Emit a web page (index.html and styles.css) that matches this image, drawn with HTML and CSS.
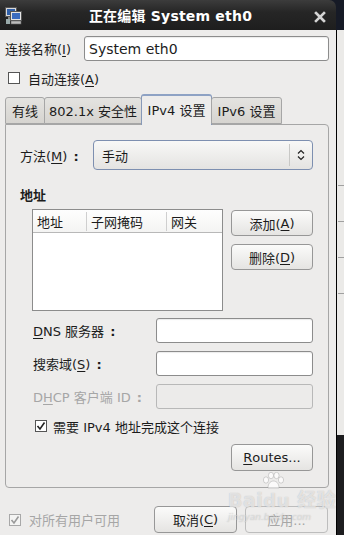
FILE: index.html
```html
<!DOCTYPE html>
<html>
<head>
<meta charset="utf-8">
<link rel="stylesheet" href="styles.css">
</head>
<body>
<div class="screen">
  <div class="window">
    <div class="titlebar">
      <svg class="app-icon" width="18" height="18" viewBox="0 0 18 18">
        <rect x="0.5" y="0.5" width="11" height="9" fill="#d8d8d8" stroke="#555"/>
        <rect x="2" y="2" width="8" height="6" fill="#2f5fa8"/>
        <rect x="3" y="10" width="6" height="2" fill="#888"/>
        <rect x="1" y="12" width="4" height="5" fill="#9aa"/>
        <rect x="5.5" y="4.5" width="11" height="9" fill="#e4e4e4" stroke="#555"/>
        <rect x="7" y="6" width="8" height="6" fill="#3a6cc0"/>
        <rect x="6" y="14" width="10" height="3" fill="#bbb" stroke="#666" stroke-width="0.6"/>
      </svg>
      <span class="title">正在编辑 System eth0</span>
      <svg class="close" width="12" height="12" viewBox="0 0 12 12">
        <path d="M2 2 L10 10 M10 2 L2 10" stroke="#d4d4d4" stroke-width="2.6" stroke-linecap="square"/>
      </svg>
    </div>
    <div class="content">
      <div class="name-row">
        <span class="name-label">连接名称(<u>I</u>)</span>
        <div class="entry name-entry">System eth0</div>
      </div>
      <div class="check-row">
        <span class="box"></span>
        <span>自动连接(<u>A</u>)</span>
      </div>
      <div class="tabs">
        <div class="tab tab-wired">有线</div>
        <div class="tab tab-sec">802.1x 安全性</div>
        <div class="tab tab-active">IPv4 设置</div>
        <div class="tab tab-v6">IPv6 设置</div>
      </div>
      <div class="panel">
        <div class="method-row">
          <span class="method-label">方法(<u>M</u>)<span class="colon">:</span></span>
          <div class="combo">
            <span class="combo-text">手动</span>
            <span class="combo-sep"></span>
            <svg class="combo-arrow" width="8" height="12" viewBox="0 0 8 12">
              <path d="M1 4.5 L4 1.5 L7 4.5 M1 7.5 L4 10.5 L7 7.5" fill="none" stroke="#222" stroke-width="1.2"/>
            </svg>
          </div>
        </div>
        <div class="section-title">地址</div>
        <div class="address">
          <div class="list">
            <div class="list-head">
              <span class="col col-addr">地址</span>
              <span class="col col-mask">子网掩码</span>
              <span class="col col-gw">网关</span>
            </div>
          </div>
          <div class="addr-buttons">
            <div class="button">添加(<u>A</u>)</div>
            <div class="button">删除(<u>D</u>)</div>
          </div>
        </div>
        <div class="form">
          <span class="form-label"><u>D</u>NS 服务器<span class="colon">:</span></span>
          <div class="entry"></div>
          <span class="form-label">搜索域(<u>S</u>)<span class="colon">:</span></span>
          <div class="entry"></div>
          <span class="form-label disabled">D<u>H</u>CP 客户端 ID<span class="colon">:</span></span>
          <div class="entry entry-disabled"></div>
        </div>
        <div class="check-row require-row">
          <span class="box">
            <svg width="10" height="10" viewBox="0 0 10 10"><path d="M1.5 5 L4 8 L8.5 1.5" fill="none" stroke="#222" stroke-width="1.6"/></svg>
          </span>
          <span>需要 IPv4 地址完成这个连接</span>
        </div>
        <div class="routes-row">
          <div class="button routes"><u>R</u>outes...</div>
        </div>
      </div>
      <div class="footer">
        <div class="check-row footer-check disabled">
          <span class="box box-disabled">
            <svg width="10" height="10" viewBox="0 0 10 10"><path d="M1.5 5 L4 8 L8.5 1.5" fill="none" stroke="#9a9a9a" stroke-width="1.6"/></svg>
          </span>
          <span>对所有用户可用</span>
        </div>
        <div class="footer-buttons">
          <div class="button">取消(<u>C</u>)</div>
          <div class="button button-disabled">应用...</div>
        </div>
      </div>
      <div class="watermark">
        <svg class="wm-paw" width="22" height="18" viewBox="0 0 22 18">
          <g fill="rgba(255,255,255,0.75)" stroke="rgba(150,150,150,0.5)" stroke-width="0.8">
            <ellipse cx="4" cy="8" rx="2.6" ry="3.2"/>
            <ellipse cx="9" cy="3.5" rx="2.6" ry="3.2"/>
            <ellipse cx="14.5" cy="3.5" rx="2.6" ry="3.2"/>
            <ellipse cx="19" cy="8" rx="2.6" ry="3.2"/>
            <path d="M6 16 C6 11 9 9 11.5 9 C14 9 17 11 17 16 Z"/>
          </g>
        </svg>
        <div class="wm-main">Bai<span class="wm-du">du</span> 经验</div>
        <div class="wm-sub">jingyan.baidu.com</div>
      </div>
    </div>
  </div>
  <div class="behind">
    <div class="behind-top"></div>
    <div class="behind-win">
      <div class="bline"></div>
      <div class="bline"></div>
      <div class="bline"></div>
      <div class="bline"></div>
    </div>
    <div class="behind-bottom"></div>
  </div>
</div>
</body>
</html>
```

FILE: styles.css
```css
* { box-sizing: border-box; }
html, body { margin: 0; padding: 0; }
body {
  width: 344px;
  height: 535px;
  overflow: hidden;
  background: #161a26;
  font-family: "DejaVu Sans", "Noto Sans CJK SC", sans-serif;
  font-size: 13px;
  color: #1c1c1c;
}
u { text-decoration: underline; text-underline-offset: 2px; }
.colon { font-weight: bold; margin-left: 6px; }

.screen { display: flex; width: 344px; height: 535px; }

.window {
  width: 336px;
  height: 535px;
  display: flex;
  flex-direction: column;
  flex: none;
}

.titlebar {
  height: 30px;
  flex: none;
  display: flex;
  align-items: center;
  background: linear-gradient(#3c3c3c, #262626 40%, #1e1e1e);
  border-top-right-radius: 7px;
  padding: 0 8px 0 5px;
  color: #fff;
}
.app-icon { flex: none; margin-top: 2px; }
.title {
  flex: 1;
  text-align: center;
  font-weight: bold;
  font-size: 14px;
  letter-spacing: 0.2px;
  padding-left: 4px;
}
.close { flex: none; margin-top: 4px; margin-right: 2px; }

.content {
  position: relative;
  flex: 1;
  background: #edeceb;
  padding: 6px 7px 0 5px;
  display: flex;
  flex-direction: column;
}

.name-row {
  display: flex;
  align-items: center;
  height: 25px;
}
.name-label { width: 79px; flex: none; }
.entry {
  height: 25px;
  background: #fff;
  border: 1px solid #8c8c8c;
  border-radius: 3px;
  box-shadow: inset 0 1px 1px rgba(0,0,0,0.08);
  padding: 0 5px;
  display: flex;
  align-items: center;
}
.name-entry { flex: 1; font-size: 14px; padding-left: 4px; }

.check-row {
  display: flex;
  align-items: center;
  height: 24px;
  margin-top: 5px;
  padding-left: 3px;
}
.box {
  width: 12px;
  height: 12px;
  border: 1px solid #555;
  background: #fff;
  margin-right: 8px;
  flex: none;
  display: flex;
  align-items: center;
  justify-content: center;
}
.box-disabled { border-color: #a8a8a8; background: #f4f4f3; }
.disabled { color: #a6a6a6; }

.tabs {
  display: flex;
  align-items: flex-end;
  height: 30px;
  margin-top: 5px;
  position: relative;
  z-index: 1;
}
.tab {
  height: 27px;
  border: 1px solid #a6a6a6;
  border-radius: 3px 3px 0 0;
  background: linear-gradient(#e4e3e0, #d6d4d0);
  display: flex;
  align-items: center;
  justify-content: center;
  margin-bottom: 1px;
}
.tab-wired { width: 40px; }
.tab-sec { width: 98px; margin-left: -1px; }
.tab-active {
  width: 71px;
  height: 31px;
  margin-bottom: 0;
  background: #edeceb;
  border-color: #8799b8;
  border-top: 2px solid #8ea2c4;
  border-bottom: none;
  margin-left: -1px;
  padding-bottom: 3px;
}
.tab-v6 { width: 71px; margin-left: -1px; }

.panel {
  margin-top: -1px;
  height: 364px;
  width: 324px;
  border: 1px solid #a6a6a6;
  border-radius: 0 4px 4px 4px;
  padding: 15px 15px 0 14px;
  display: flex;
  flex-direction: column;
}

.method-row {
  display: flex;
  align-items: center;
  height: 30px;
}
.method-label { width: 73px; flex: none; }
.combo {
  width: 221px;
  height: 30px;
  border: 1px solid #7d8fb0;
  border-radius: 4px;
  background: linear-gradient(#f8f8f7, #e4e3e1);
  display: flex;
  align-items: center;
  padding-left: 8px;
}
.combo-text { flex: 1; }
.combo-sep { width: 1px; height: 22px; background: #c8c8c6; margin-right: 7px; }
.combo-arrow { margin-right: 7px; }

.section-title {
  font-weight: bold;
  margin-top: 18px;
  line-height: 16px;
  height: 16px;
}

.address {
  display: flex;
  margin-top: 5px;
  padding-left: 12px;
  gap: 8px;
}
.list {
  width: 192px;
  height: 102px;
  background: #fff;
  border: 1px solid #8c8c8c;
}
.list-head {
  display: flex;
  height: 23px;
  border-bottom: 1px solid #b8b8b8;
  align-items: center;
  background: linear-gradient(#fefefe, #f4f4f3);
}
.col { padding-left: 4px; }
.col-addr { width: 53px; }
.col-mask { width: 80px; border-left: 1px solid #cfcfcf; }
.col-gw { border-left: 1px solid #cfcfcf; }

.addr-buttons {
  display: flex;
  flex-direction: column;
  gap: 8px;
  margin-top: 1px;
}
.button {
  width: 82px;
  height: 26px;
  border: 1px solid #979797;
  border-radius: 4px;
  background: linear-gradient(#fbfbfa, #e5e4e2);
  display: flex;
  align-items: center;
  justify-content: center;
}
.button-disabled {
  color: #a6a6a6;
  border-color: #bdbdbd;
  background: #eeedec;
}

.form {
  display: grid;
  grid-template-columns: 123px 157px;
  grid-auto-rows: 25px;
  row-gap: 8px;
  margin-top: 7px;
  padding-left: 13px;
  align-items: center;
}
.form .entry { height: 25px; }
.form .entry-disabled {
  background: #ecebea;
  border-color: #b8b8b8;
  box-shadow: none;
}

.require-row {
  margin-top: 5px;
  padding-left: 15px;
}
.require-row .box { margin-right: 6px; }

.routes-row {
  display: flex;
  justify-content: flex-end;
  margin-top: 6px;
}
.routes { height: 27px; }

.footer {
  display: flex;
  align-items: center;
  justify-content: space-between;
  margin-top: 18px;
  height: 27px;
  padding-right: 1px;
}
.footer .check-row { margin-top: 0; padding-left: 4px; }
.footer-buttons { display: flex; gap: 8px; }
.footer-buttons .button { width: 83px; height: 27px; }

.watermark {
  position: absolute;
  left: 228px;
  top: 442px;
  width: 96px;
  color: rgba(255,255,255,0.6);
  text-shadow: 0 0 1px rgba(140,140,140,0.6);
  pointer-events: none;
  white-space: nowrap;
}
.wm-paw { display: block; margin-left: 34px; }
.wm-main { font-size: 19px; font-weight: bold; line-height: 20px; letter-spacing: 0.5px; }
.wm-du { font-size: 18px; }
.wm-sub { font-size: 9px; margin-top: 1px; font-style: italic; color: rgba(255,255,255,0.45); }

.behind {
  width: 8px;
  height: 535px;
  display: flex;
  flex-direction: column;
}
.behind-top { height: 30px; background: #161a26; }
.behind-win {
  height: 405px;
  background: #ebeae8;
  border-left: 1px solid #000;
  padding-top: 155px;
  display: flex;
  flex-direction: column;
  gap: 35px;
}
.bline { height: 1px; background: #a0a0a0; margin-left: 1px; }
.behind-bottom { flex: 1; background: #1d1d1f; border-left: 1px solid #000; }
```
